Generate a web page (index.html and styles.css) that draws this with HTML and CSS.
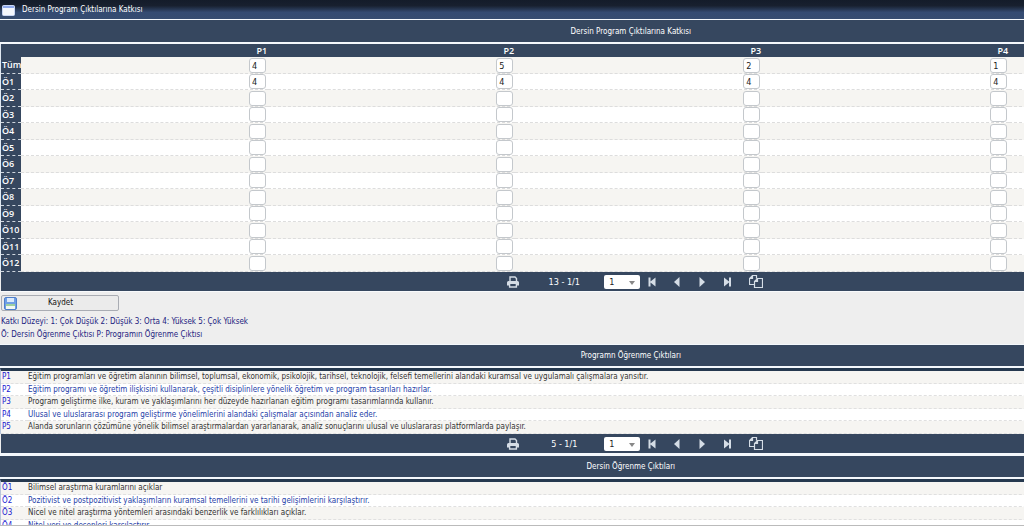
FILE: index.html
```
<!DOCTYPE html>
<html lang="tr">
<head>
<meta charset="utf-8">
<title>Dersin Program Çıktılarına Katkısı</title>
<link rel="stylesheet" href="styles.css">
</head>
<body>
<svg class="sprite" aria-hidden="true">
  <symbol id="i-print" viewBox="0 0 12 12"><path d="M3 5V1h5l1.500 1.500V5" fill="none" stroke="currentColor" stroke-width="1.400"/><path d="M0 6.500Q0 5 1.500 5h9Q12 5 12 6.500V9.500h-2V8H2v1.500H0z" fill="currentColor"/><path d="M2.600 8v3h6.800V8" fill="none" stroke="currentColor" stroke-width="1.400"/></symbol>
  <symbol id="i-first" viewBox="0 0 12 12"><path d="M2.500 1.500h2v4L9.500 1.500v9l-5-4v4h-2z" fill="currentColor"/></symbol>
  <symbol id="i-prev" viewBox="0 0 12 12"><path d="M8.500 1v10L3 6z" fill="currentColor"/></symbol>
  <symbol id="i-next" viewBox="0 0 12 12"><path d="M3.500 1v10L9 6z" fill="currentColor"/></symbol>
  <symbol id="i-last" viewBox="0 0 12 12"><path d="M10 1.500H8v4L3 1.500v9l5-4v4h2z" fill="currentColor"/></symbol>
  <symbol id="i-copy" viewBox="0 0 14 13"><path d="M5.500 9.500h-5v-6l3-3h4v3M3.500.5v3h-3M5.500 6.500l3-3h5v9h-8zM8.500 3.500v3h-3" fill="none" stroke="currentColor" stroke-width="1.200"/></symbol>
</svg>
<div class="window">
  <header class="titlebar">
    <svg class="app-icon" viewBox="0 0 13 11" aria-hidden="true"><rect x=".5" y=".5" width="12" height="10" rx="1" fill="#f4f7fd" stroke="#c9d6f4"/><path d="M1 1h11v2H1z" fill="#8fa9ea"/></svg>
    <h1>Dersin Program Çıktılarına Katkısı</h1>
  </header>
  <main class="content">
    <section>
      <h2 class="bar first">Dersin Program Çıktılarına Katkısı</h2>
      <table class="matrix">
        <thead><tr><td class="key"></td><th scope="col">P1</th><th scope="col">P2</th><th scope="col">P3</th><th scope="col">P4</th><td class="rest"></td></tr></thead>
        <tbody>
          <tr><th scope="row">Tüm</th><td><input aria-label="Tüm P1" value="4"></td><td><input aria-label="Tüm P2" value="5"></td><td><input aria-label="Tüm P3" value="2"></td><td><input aria-label="Tüm P4" value="1"></td><td></td></tr>
          <tr><th scope="row">Ö1</th><td><input aria-label="Ö1 P1" value="4"></td><td><input aria-label="Ö1 P2" value="4"></td><td><input aria-label="Ö1 P3" value="4"></td><td><input aria-label="Ö1 P4" value="4"></td><td></td></tr>
          <tr><th scope="row">Ö2</th><td><input aria-label="Ö2 P1"></td><td><input aria-label="Ö2 P2"></td><td><input aria-label="Ö2 P3"></td><td><input aria-label="Ö2 P4"></td><td></td></tr>
          <tr><th scope="row">Ö3</th><td><input aria-label="Ö3 P1"></td><td><input aria-label="Ö3 P2"></td><td><input aria-label="Ö3 P3"></td><td><input aria-label="Ö3 P4"></td><td></td></tr>
          <tr><th scope="row">Ö4</th><td><input aria-label="Ö4 P1"></td><td><input aria-label="Ö4 P2"></td><td><input aria-label="Ö4 P3"></td><td><input aria-label="Ö4 P4"></td><td></td></tr>
          <tr><th scope="row">Ö5</th><td><input aria-label="Ö5 P1"></td><td><input aria-label="Ö5 P2"></td><td><input aria-label="Ö5 P3"></td><td><input aria-label="Ö5 P4"></td><td></td></tr>
          <tr><th scope="row">Ö6</th><td><input aria-label="Ö6 P1"></td><td><input aria-label="Ö6 P2"></td><td><input aria-label="Ö6 P3"></td><td><input aria-label="Ö6 P4"></td><td></td></tr>
          <tr><th scope="row">Ö7</th><td><input aria-label="Ö7 P1"></td><td><input aria-label="Ö7 P2"></td><td><input aria-label="Ö7 P3"></td><td><input aria-label="Ö7 P4"></td><td></td></tr>
          <tr><th scope="row">Ö8</th><td><input aria-label="Ö8 P1"></td><td><input aria-label="Ö8 P2"></td><td><input aria-label="Ö8 P3"></td><td><input aria-label="Ö8 P4"></td><td></td></tr>
          <tr><th scope="row">Ö9</th><td><input aria-label="Ö9 P1"></td><td><input aria-label="Ö9 P2"></td><td><input aria-label="Ö9 P3"></td><td><input aria-label="Ö9 P4"></td><td></td></tr>
          <tr><th scope="row">Ö10</th><td><input aria-label="Ö10 P1"></td><td><input aria-label="Ö10 P2"></td><td><input aria-label="Ö10 P3"></td><td><input aria-label="Ö10 P4"></td><td></td></tr>
          <tr><th scope="row">Ö11</th><td><input aria-label="Ö11 P1"></td><td><input aria-label="Ö11 P2"></td><td><input aria-label="Ö11 P3"></td><td><input aria-label="Ö11 P4"></td><td></td></tr>
          <tr><th scope="row">Ö12</th><td><input aria-label="Ö12 P1"></td><td><input aria-label="Ö12 P2"></td><td><input aria-label="Ö12 P3"></td><td><input aria-label="Ö12 P4"></td><td></td></tr>
        </tbody>
      </table>
      <nav class="pager" aria-label="Sayfalar">
        <button class="print" aria-label="Yazdır"><svg><use href="#i-print"/></svg></button>
        <span class="count">13 - 1/1</span>
        <span class="pick"><select aria-label="Sayfa"><option>1</option></select></span>
        <button aria-label="İlk"><svg><use href="#i-first"/></svg></button>
        <button aria-label="Önceki"><svg><use href="#i-prev"/></svg></button>
        <button aria-label="Sonraki"><svg><use href="#i-next"/></svg></button>
        <button aria-label="Son"><svg><use href="#i-last"/></svg></button>
        <button class="copy" aria-label="Kopyala"><svg><use href="#i-copy"/></svg></button>
      </nav>
    </section>
    <div class="actions">
      <button class="save">
        <svg viewBox="0 0 13 13" aria-hidden="true"><rect x=".5" y=".5" width="12" height="12" rx="1.500" fill="#6f9fe6" stroke="#4f7fca"/><path d="M3 1h7v4H3z" fill="#dcebfb"/><path d="M2 7h9v5H2z" fill="#f2f8f2"/><path d="M2 7h9v2H2z" fill="#9ed0a0"/></svg>
        <span>Kaydet</span>
      </button>
      <p>Katkı Düzeyi: 1: Çok Düşük 2: Düşük 3: Orta 4: Yüksek 5: Çok Yüksek</p>
      <p>Ö: Dersin Öğrenme Çıktısı P: Programın Öğrenme Çıktısı</p>
    </div>
    <section class="outcomes">
      <h2 class="bar">Programn Öğrenme Çıktıları</h2>
      <table class="list">
        <tbody>
          <tr><th scope="row">P1</th><td>Eğitim programları ve öğretim alanının bilimsel, toplumsal, ekonomik, psikolojik, tarihsel, teknolojik, felsefi temellerini alandaki kuramsal ve uygulamalı çalışmalara yansıtır.</td></tr>
          <tr><th scope="row">P2</th><td>Eğitim programı ve öğretim ilişkisini kullanarak, çeşitli disiplinlere yönelik öğretim ve program tasarıları hazırlar.</td></tr>
          <tr><th scope="row">P3</th><td>Program geliştirme ilke, kuram ve yaklaşımlarını her düzeyde hazırlanan eğitim programı tasarımlarında kullanır.</td></tr>
          <tr><th scope="row">P4</th><td>Ulusal ve uluslararası program geliştirme yönelimlerini alandaki çalışmalar açısından analiz eder.</td></tr>
          <tr><th scope="row">P5</th><td>Alanda sorunların çözümüne yönelik bilimsel araştırmalardan yararlanarak, analiz sonuçlarını ulusal ve uluslararası platformlarda paylaşır.</td></tr>
        </tbody>
      </table>
      <nav class="pager" aria-label="Program çıktıları sayfaları">
        <button class="print" aria-label="Yazdır"><svg><use href="#i-print"/></svg></button>
        <span class="count">5 - 1/1</span>
        <span class="pick"><select aria-label="Sayfa"><option>1</option></select></span>
        <button aria-label="İlk"><svg><use href="#i-first"/></svg></button>
        <button aria-label="Önceki"><svg><use href="#i-prev"/></svg></button>
        <button aria-label="Sonraki"><svg><use href="#i-next"/></svg></button>
        <button aria-label="Son"><svg><use href="#i-last"/></svg></button>
        <button class="copy" aria-label="Kopyala"><svg><use href="#i-copy"/></svg></button>
      </nav>
    </section>
    <section>
      <h2 class="bar">Dersin Öğrenme Çıktıları</h2>
      <table class="list">
        <tbody>
          <tr><th scope="row">Ö1</th><td>Bilimsel araştırma kuramlarını açıklar</td></tr>
          <tr><th scope="row">Ö2</th><td>Pozitivist ve postpozitivist yaklaşımların kuramsal temellerini ve tarihi gelişimlerini karşılaştırır.</td></tr>
          <tr><th scope="row">Ö3</th><td>Nicel ve nitel araştırma yöntemleri arasındaki benzerlik ve farklılıkları açıklar.</td></tr>
          <tr><th scope="row">Ö4</th><td>Nitel veri ve desenleri karşılaştırır</td></tr>
        </tbody>
      </table>
    </section>
  </main>
</div>
</body>
</html>
```
FILE: styles.css
```
* { box-sizing: border-box; }
body {
  margin: 0;
  font: 8px/12px "DejaVu Sans Condensed", "DejaVu Sans", sans-serif;
  color: #333;
  background: #eee;
}
h1, h2, p { margin: 0; font-size: 8px; font-weight: 400; }
button, input, select { font: inherit; margin: 0; }
button { cursor: pointer; }
.sprite { display: none; }
.window {
  height: 100vh;
  overflow: hidden;
  border-bottom: 1px solid #bbb;
}
.titlebar {
  display: flex;
  align-items: center;
  gap: 7px;
  height: 20px;
  padding: 1px 0 0 2px;
  border-bottom: 1px solid #f4f8fc;
  color: #fff;
  background: linear-gradient(#141c2a 0, #18202f 30%, #344b72 65%, #364c70 100%);
}
.app-icon { width: 13px; height: 11px; }
.content { width: 123.2%; }
.bar {
  height: 24px;
  border: solid #f4f8fc;
  border-width: 1px 0 2px;
  line-height: 22px;
  text-align: center;
  color: #fff;
  background: #36475f;
}
.bar.first { border-top-color: #36475f; }
table { width: 100%; border-collapse: separate; border-spacing: 0; table-layout: fixed; }
th, td { padding: 0; }
.matrix { border-left: 1px solid #dfe7f0; }
.matrix .key { width: 20px; }
.matrix thead th { width: 19.6%; padding-right: 1px; line-height: 13px; }
.matrix th { color: #fff; font-weight: 600; font-size: 9px; font-family: "Open Sans", sans-serif; }
.matrix thead { background: #36475f; }
.matrix thead tr { height: 13px; }
.matrix tbody th {
  padding-left: 1px;
  text-align: left;
  white-space: nowrap;
  background: #36475f;
  border-bottom: 1px dashed #cfd6de;
}
.matrix thead th, .matrix td { text-align: right; }
.matrix tbody td { padding-right: 2px; border-bottom: 1px dashed #ddd; }
.matrix tbody tr { height: 16px; background: #fff; }
.matrix tbody tr:nth-child(odd) { height: 17px; background: #f6f5f2; }
.matrix input {
  display: block;
  width: 17px;
  height: 15px;
  margin-left: auto;
  padding: 1px 0 0 2px;
  border: 1px solid #c4c8cc;
  border-radius: 3px;
  font-size: 9px;
  color: #222;
  background: #fff;
}
.pager {
  display: flex;
  align-items: center;
  justify-content: center;
  gap: 13px;
  height: 19px;
  margin-left: 1px;
  padding-left: 8px;
  font-size: 9px;
  color: #fff;
  background: #36475f;
}
.pager button {
  display: block;
  width: 12px;
  height: 12px;
  padding: 0;
  border: 0;
  color: #d5dde6;
  background: none;
}
.pager svg { display: block; width: 100%; height: 100%; }
.pager .copy { width: 14px; height: 13px; margin-left: 3px; }
.pager .count { width: 59px; padding-left: 5px; text-align: center; }
.pick { display: flex; position: relative; margin-right: -7px; }
.pick select {
  width: 36px;
  height: 14px;
  padding: 0 0 0 5px;
  appearance: none;
  border: 0;
  border-radius: 2px;
  color: #222;
  background: #fff;
}
.pick::after {
  content: "";
  position: absolute;
  right: 5px;
  top: 6px;
  border: 3px solid transparent;
  border-top: 4px solid #888;
  border-bottom: 0;
  pointer-events: none;
}
.actions { padding: 3px 0 3px 1px; border-top: 1px solid #f8fafc; color: #1c1c80; }
.save {
  display: flex;
  align-items: center;
  width: 118px;
  height: 16px;
  margin-bottom: 4px;
  padding: 0 2px;
  border: 1px solid #a9acb3;
  border-radius: 2px;
  color: #111;
  background: #ebebeb;
}
.save svg { width: 13px; height: 13px; }
.save span { flex: 1; padding-right: 12px; }
.actions p { line-height: 13px; }
.outcomes { border-bottom: 2px solid #f4f8fc; }
.list { border-top: 3px solid #26394f; border-left: 1px solid #b8c6dc; }
.list tr { height: 12px; background: #fff; color: #2440a8; }
.list tr:nth-child(odd) { height: 13px; background: #f6f5f2; color: #333; }
.list th, .list td { padding-top: 1px; line-height: 10px; vertical-align: top; border-bottom: 1px dashed #e0e0e0; text-align: left; font-weight: 400; }
.list th { width: 27px; padding-left: 1px; color: #1a1ad0; }
```
